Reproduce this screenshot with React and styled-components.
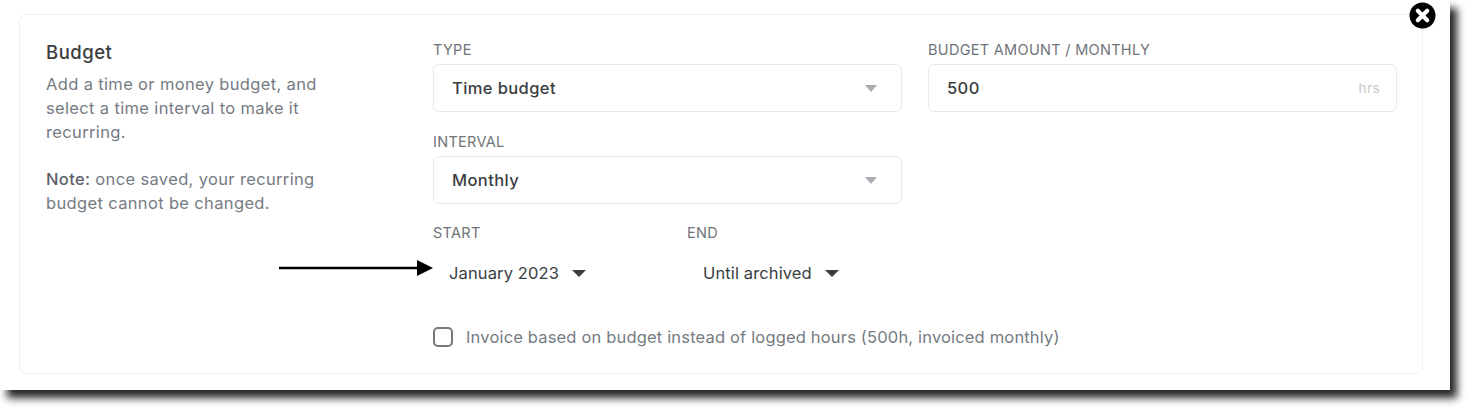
import React from "react";
import styled, { createGlobalStyle } from "styled-components";

const colors = {
  dark: "#3a3d40",
  weak: "#757b82",
  label: "#6f7478",
  border: "#e8e9ea",
  caret: "#a9adb1",
};

const GlobalStyle = createGlobalStyle`
  html, body {
    margin: 0;
    padding: 0;
    background: #fff;
  }
  body {
    font-family: Inter, "Liberation Sans", sans-serif;
  }
`;

const Page = styled.div`
  width: 1468px;
  height: 408px;
  overflow: hidden;
  background: #fff;
`;

const Sheet = styled.div`
  width: 1450px;
  height: 390px;
  box-sizing: border-box;
  padding: 14px 27px 0 19px;
  background: #fff;
  box-shadow: 7px 8px 8px rgba(0, 0, 0, 0.85);
`;

const Card = styled.section`
  position: relative;
  box-sizing: border-box;
  height: 360px;
  padding: 26px 26px 0 26px;
  display: flex;
  border: 1.5px solid #eeeff0;
  border-radius: 8px;
`;

const CloseButton = styled.button`
  position: absolute;
  top: -13px;
  right: -14px;
  width: 27px;
  height: 27px;
  padding: 0;
  border: 0;
  background: none;
  line-height: 0;
`;

const Intro = styled.div`
  width: 387px;
  flex: none;
`;

const Heading = styled.h2`
  margin: 0 0 9px;
  font-size: 18.5px;
  line-height: 22px;
  font-weight: 500;
  letter-spacing: 0.5px;
  color: ${colors.dark};
`;

const Copy = styled.p`
  margin: 0 0 23px;
  width: 290px;
  font-size: 16.5px;
  line-height: 24px;
  letter-spacing: 0.35px;
  color: ${colors.weak};
  b {
    font-weight: 500;
    color: #5c6167;
  }
`;

const Form = styled.div`
  position: relative;
  flex: 1;
  display: grid;
  grid-template-columns: 469px 469px;
  grid-auto-rows: min-content;
  column-gap: 26px;
  row-gap: 21px;
`;

const Field = styled.div`
  grid-column: ${(p) => p.$column || "auto"};
`;

const Label = styled.label`
  display: block;
  margin-bottom: 5px;
  font-size: 14.5px;
  line-height: 18px;
  font-weight: 400;
  letter-spacing: 0.3px;
  color: ${colors.label};
`;

const Control = styled.div`
  box-sizing: border-box;
  height: 48px;
  padding: 0 16px 0 18px;
  display: flex;
  align-items: center;
  justify-content: space-between;
  border: 1.5px solid ${colors.border};
  border-radius: 6px;
  font-size: 16.5px;
  font-weight: 500;
  letter-spacing: 0.4px;
  color: ${colors.dark};
`;

const Suffix = styled.span`
  font-size: 13.5px;
  font-weight: 400;
  color: #c9cbce;
`;

const Caret = styled.span`
  width: 0;
  height: 0;
  margin-right: ${(p) => (p.$dark ? 0 : 8)}px;
  border-left: ${(p) => (p.$dark ? 7 : 6.5)}px solid transparent;
  border-right: ${(p) => (p.$dark ? 7 : 6.5)}px solid transparent;
  border-top: 7px solid ${(p) => (p.$dark ? colors.dark : colors.caret)};
`;

const PeriodRow = styled.div`
  grid-column: 1 / 3;
  margin-top: -1px;
  display: flex;
`;

const Period = styled.div`
  width: 254px;
`;

const PeriodValue = styled.div`
  margin-top: 19px;
  padding-left: 16px;
  display: flex;
  align-items: center;
  gap: 13px;
  height: 24px;
  font-size: 16.5px;
  letter-spacing: 0.12px;
  color: ${colors.dark};
`;

const CheckRow = styled.div`
  grid-column: 1 / 3;
  margin-top: 21px;
  display: flex;
  align-items: center;
  gap: 13px;
  font-size: 16.5px;
  letter-spacing: 0.17px;
  color: ${colors.weak};
`;

const Checkbox = styled.span`
  box-sizing: border-box;
  width: 20px;
  height: 20px;
  border: 2px solid #74797e;
  border-radius: 5px;
`;

const Arrow = styled.svg`
  position: absolute;
  left: -155px;
  top: 218px;
`;

const App = () => {
  return (
    <Page>
      <GlobalStyle />
      <Sheet>
        <Card>
          <CloseButton aria-label="Close">
            <svg width="27" height="27" viewBox="0 0 27 27">
              <circle cx="13.5" cy="13.5" r="13" fill="#000" />
              <path d="M8.8 8.8 18.2 18.2M18.2 8.8 8.8 18.2" stroke="#fff" strokeWidth="4.2" strokeLinecap="round" />
            </svg>
          </CloseButton>
          <Intro>
            <Heading>Budget</Heading>
            <Copy>Add a time or money budget, and select a time interval to make it recurring.</Copy>
            <Copy>
              <b>Note:</b> once saved, your recurring budget cannot be changed.
            </Copy>
          </Intro>
          <Form>
            <Arrow width="156" height="18" viewBox="0 0 156 18">
              <path d="M1 9H140" stroke="#000" strokeWidth="2.6" />
              <path d="M139 1 155 9 139 17Z" fill="#000" />
            </Arrow>
            <Field>
              <Label>TYPE</Label>
              <Control>
                Time budget
                <Caret />
              </Control>
            </Field>
            <Field>
              <Label>BUDGET AMOUNT / MONTHLY</Label>
              <Control>
                500
                <Suffix>hrs</Suffix>
              </Control>
            </Field>
            <Field $column="1">
              <Label>INTERVAL</Label>
              <Control>
                Monthly
                <Caret />
              </Control>
            </Field>
            <PeriodRow>
              <Period>
                <Label>START</Label>
                <PeriodValue>
                  January 2023
                  <Caret $dark />
                </PeriodValue>
              </Period>
              <Period>
                <Label>END</Label>
                <PeriodValue>
                  Until archived
                  <Caret $dark />
                </PeriodValue>
              </Period>
            </PeriodRow>
            <CheckRow>
              <Checkbox />
              Invoice based on budget instead of logged hours (500h, invoiced monthly)
            </CheckRow>
          </Form>
        </Card>
      </Sheet>
    </Page>
  );
};

export default App;
